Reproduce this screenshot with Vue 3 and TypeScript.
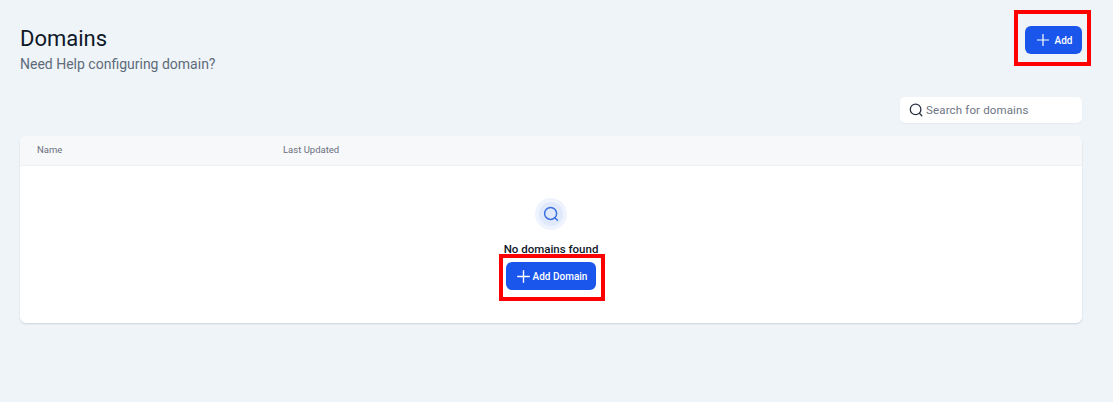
<script setup lang="ts">
const title: string = 'Domains'
</script>

<template>
  <div class="page">
    <header class="head">
      <div class="titles">
        <h1>{{ title }}</h1>
        <p>Need Help configuring domain?</p>
      </div>
      <button class="btn btn-add">
        <svg width="12" height="12" viewBox="0 0 12 12" fill="none" stroke="currentColor" stroke-width="1.2"><path d="M6 .5v11M.5 6h11" stroke-linecap="round"/></svg>
        <span>Add</span>
        <i class="mark mark-add"></i>
      </button>
    </header>
    <div class="tools">
      <div class="search">
        <svg width="14" height="14" viewBox="0 0 14 14" fill="none" stroke="#2b3040" stroke-width="1.3"><circle cx="6.6" cy="6.4" r="5.3"/><path d="M10.6 10.4l2.2 2.4" stroke-linecap="round"/></svg>
        <span>Search for domains</span>
      </div>
    </div>
    <section class="card">
      <div class="thead">
        <span class="c1">Name</span>
        <span>Last Updated</span>
      </div>
      <div class="empty">
        <div class="halo">
          <div class="halo-inner">
            <svg width="16" height="16" viewBox="0 0 16 16" fill="none" stroke="#3b6fe0" stroke-width="1.5"><circle cx="7.6" cy="7.4" r="6"/><path d="M12 11.8l2.4 2.5" stroke-linecap="round"/></svg>
          </div>
        </div>
        <div class="msg">No domains found</div>
        <button class="btn btn-domain">
          <svg width="13" height="13" viewBox="0 0 13 13" fill="none" stroke="currentColor" stroke-width="1.4"><path d="M6.5 .7v11.6M.7 6.5h11.6" stroke-linecap="round"/></svg>
          <span>Add Domain</span>
          <i class="mark mark-domain"></i>
        </button>
      </div>
    </section>
  </div>
</template>

<style>
html, body { margin: 0; background: #eef4f8; }
</style>

<style scoped>
.page {
  box-sizing: border-box;
  width: 1113px;
  height: 402px;
  padding: 26px 31px 0 20px;
  background: #eef4f8;
  font-family: Roboto, "Liberation Sans", sans-serif;
  overflow: hidden;
}
.head { display: flex; justify-content: space-between; align-items: flex-start; height: 71px; }
h1 { margin: 0; font-size: 22px; line-height: 25px; font-weight: 400; color: #101828; }
.titles p { margin: 4px 0 0; font-size: 14px; line-height: 18px; color: #5f6b7a; }
.btn {
  position: relative;
  display: flex;
  align-items: center;
  justify-content: center;
  border: 0;
  padding: 0;
  background: #1a56eb;
  color: #fff;
  border-radius: 6px;
  font-family: inherit;
  font-size: 10px;
  font-weight: 500;
}
.btn-add { width: 57px; height: 28px; gap: 6px; padding-left: 2px; }
.btn-domain { width: 90px; height: 28px; gap: 3px; margin-top: 6px; padding-left: 2px; }
.mark { position: absolute; border: 4px solid #ff0000; box-sizing: border-box; pointer-events: none; }
.mark-add { left: -11px; top: -16px; width: 77px; height: 56px; }
.mark-domain { left: -7px; top: -8px; width: 106px; height: 47px; }
.tools { display: flex; justify-content: flex-end; }
.search {
  box-sizing: border-box;
  width: 182px;
  height: 26px;
  display: flex;
  align-items: center;
  gap: 3px;
  padding-left: 9px;
  background: #fff;
  border-radius: 5px;
  box-shadow: 0 1px 2px rgba(16, 24, 40, 0.05);
  font-size: 11.5px;
  letter-spacing: 0.15px;
  color: #6f7485;
}
.card {
  margin-top: 13px;
  height: 187px;
  background: #fff;
  border-radius: 6px;
  box-shadow: 0 1px 2px rgba(16, 24, 40, 0.14);
  overflow: hidden;
}
.thead {
  box-sizing: border-box;
  height: 30px;
  display: flex;
  align-items: center;
  padding: 0 0 2px 17px;
  background: #f6f8fa;
  border-bottom: 1px solid #edf0f4;
  font-size: 9.5px;
  font-weight: 400;
  color: #6b7080;
}
.c1 { width: 246px; }
.empty { display: flex; flex-direction: column; align-items: center; padding-top: 32px; }
.halo {
  width: 32px;
  height: 32px;
  border-radius: 50%;
  background: #eef3fd;
  display: flex;
  align-items: center;
  justify-content: center;
}
.halo-inner {
  width: 24px;
  height: 24px;
  border-radius: 50%;
  background: #dfe9fb;
  display: flex;
  align-items: center;
  justify-content: center;
}
.msg { margin-top: 12px; font-size: 11.5px; line-height: 14px; font-weight: 500; color: #101828; }
</style>
